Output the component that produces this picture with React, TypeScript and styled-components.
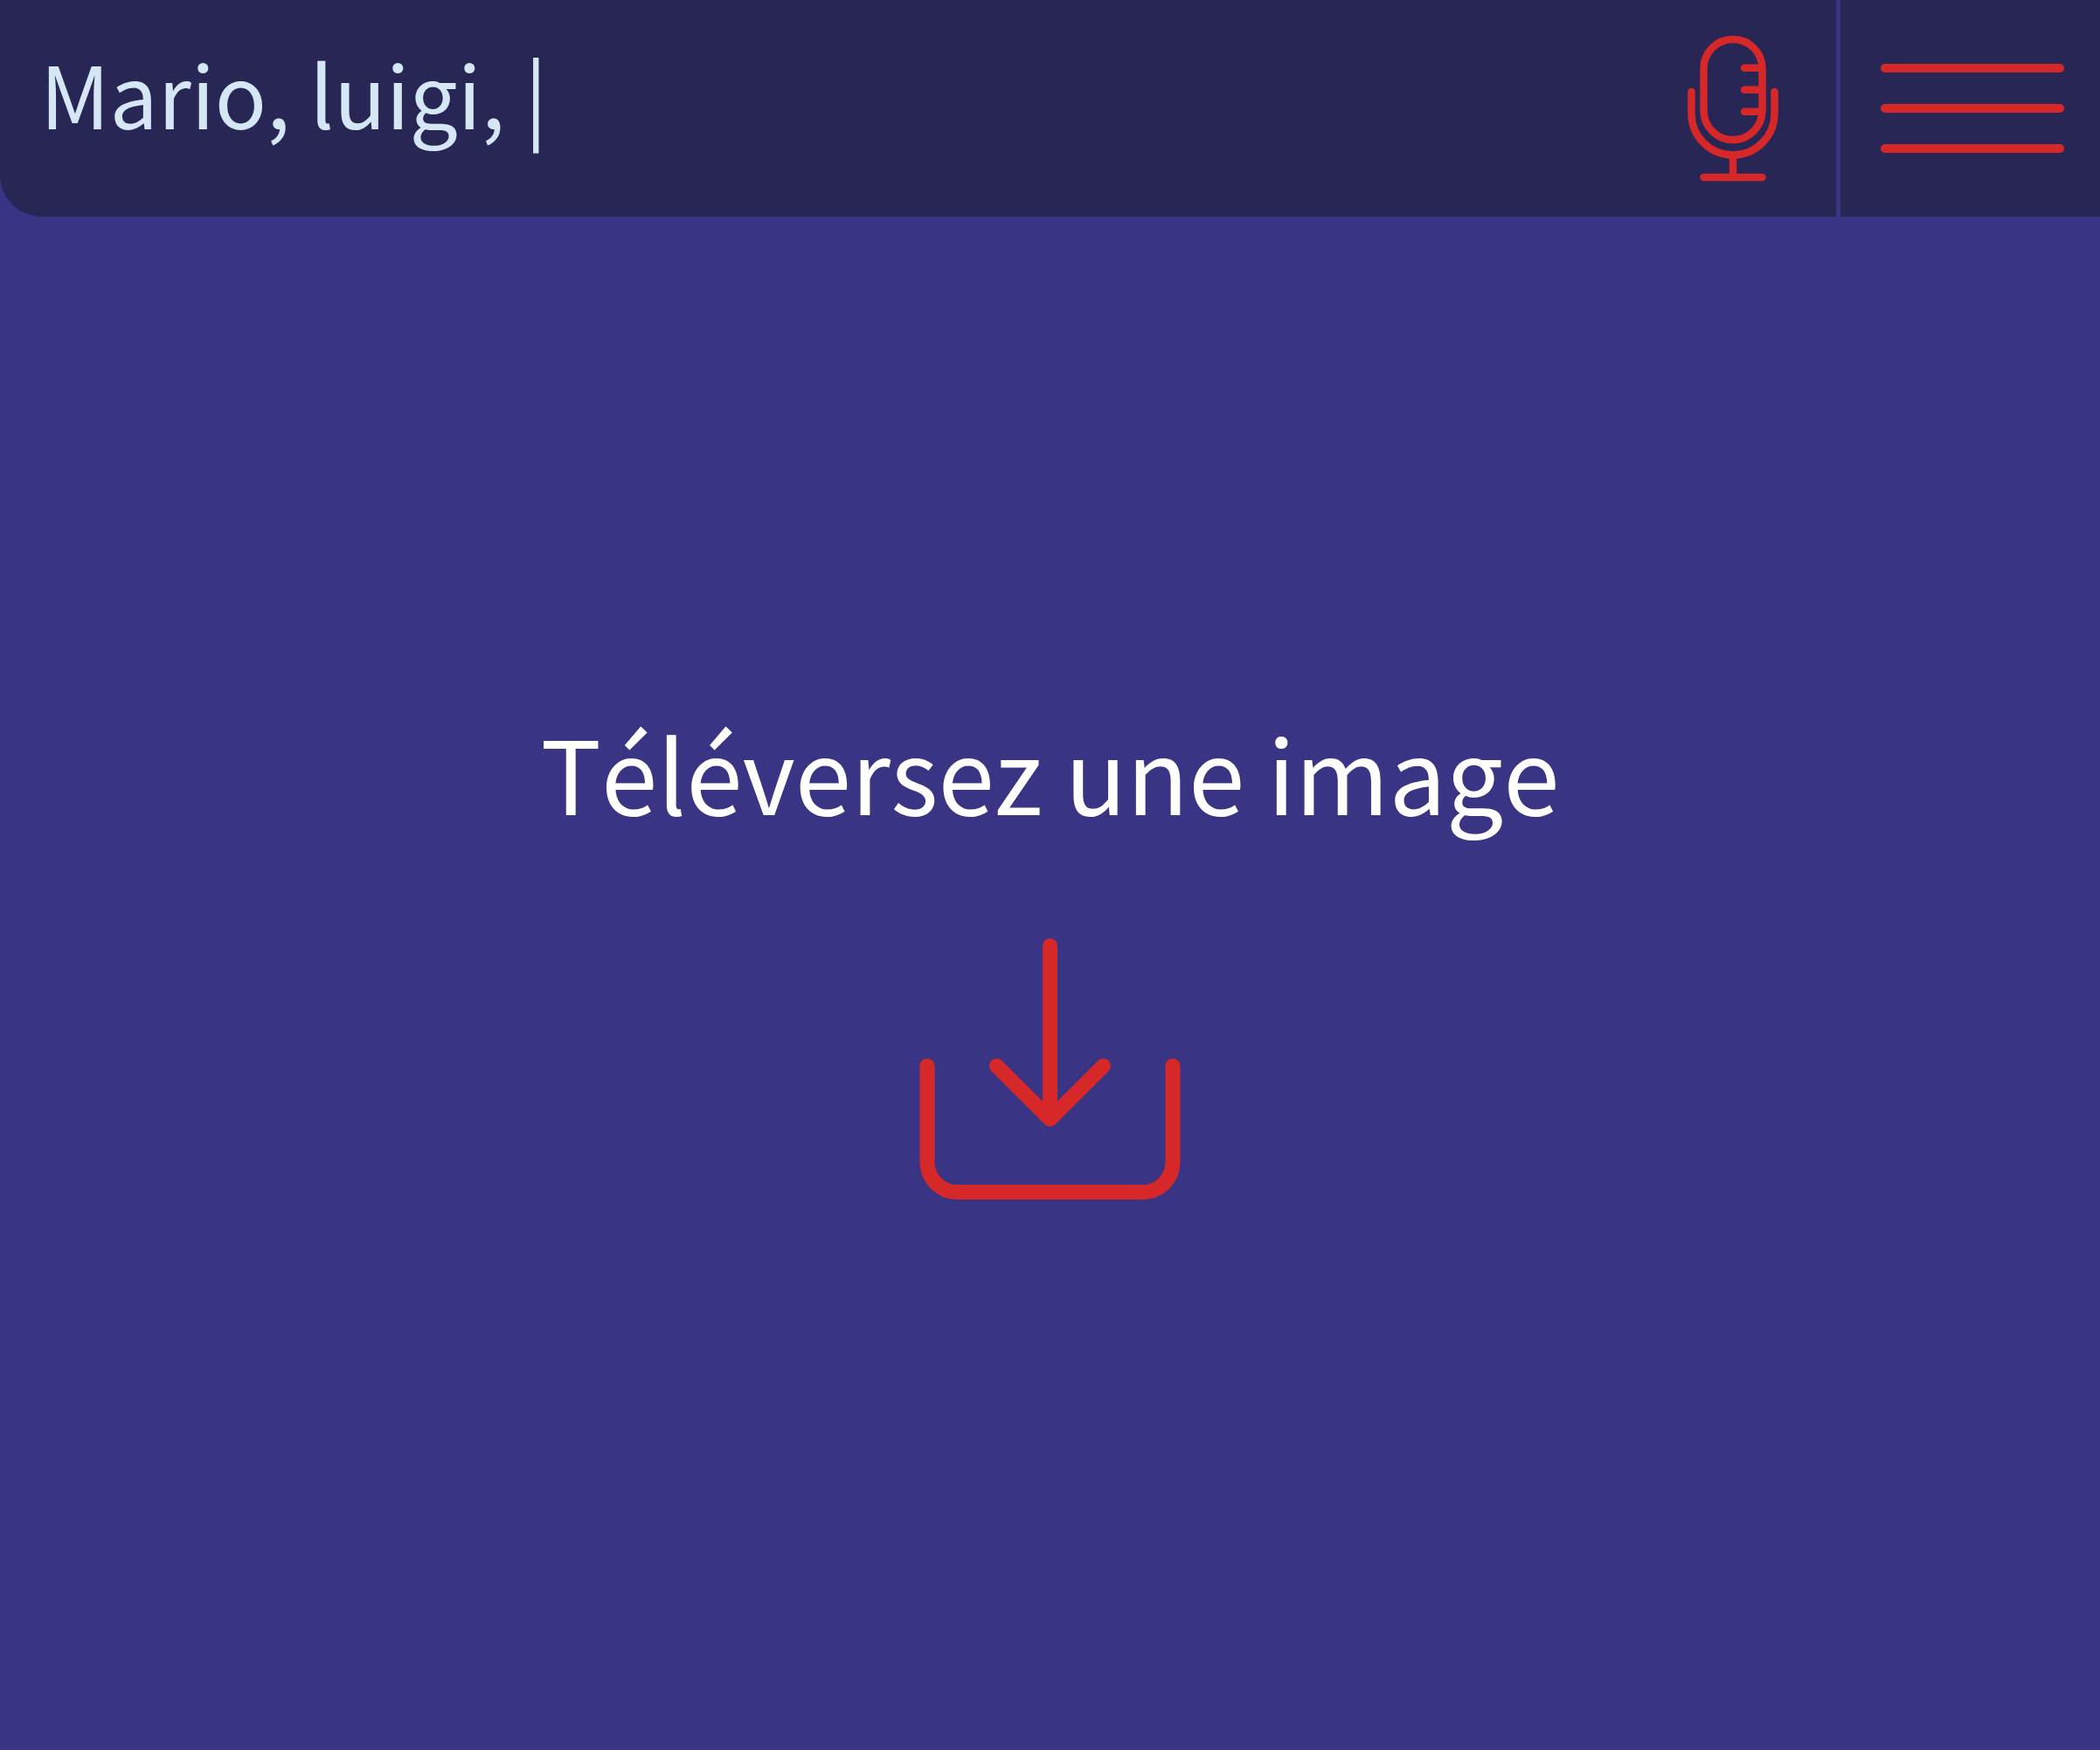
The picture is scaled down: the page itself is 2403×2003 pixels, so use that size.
import React, { useState } from "react";
import styled, { createGlobalStyle } from "styled-components";

const colors = {
  bar: "#282655",
  page: "#393484",
  accent: "#d62829",
  query: "#d5e6f5",
  title: "#ffffff",
};

const GlobalStyle = createGlobalStyle`
  *, *::before, *::after { box-sizing: border-box; }
  body {
    margin: 0;
    background: ${colors.page};
    font-family: "Noto Sans CJK SC", "Noto Sans", sans-serif;
  }
`;

const Page = styled.div`
  display: flex;
  flex-direction: column;
  min-height: 100vh;
`;

const TopBar = styled.header`
  display: flex;
  align-items: stretch;
  height: 248px;
  background: ${colors.bar};
  border-bottom-left-radius: 48px;
`;

const SearchForm = styled.form`
  display: flex;
  flex: 1;
  min-width: 0;
  padding: 0 66px 0 46px;
`;

const SearchInput = styled.input`
  flex: 1;
  min-width: 0;
  height: 210px;
  padding: 0;
  border: 0;
  outline: 0;
  background: transparent;
  color: ${colors.query};
  font: inherit;
  font-size: 98px;
  font-kerning: none;
`;

const IconButton = styled.button`
  display: flex;
  align-items: center;
  justify-content: center;
  padding: 0;
  border: 0;
  background: transparent;
  color: ${colors.accent};
  cursor: pointer;
`;

const MenuButton = styled(IconButton)`
  flex-direction: column;
  gap: 36px;
  width: 302px;
  padding-left: 5px;
  border-left: 5px solid ${colors.page};
`;

const MenuLine = styled.span`
  width: 210px;
  height: 10px;
  border-radius: 5px;
  background: currentColor;
`;

const Content = styled.main`
  display: flex;
  flex: 1;
  justify-content: center;
  align-items: center;
  padding-bottom: 84px;
`;

const DropZone = styled.button`
  display: flex;
  flex-direction: column;
  align-items: center;
  gap: 104px;
  padding: 0;
  border: 0;
  background: transparent;
  color: ${colors.title};
  font: inherit;
  font-size: 116px;
  font-kerning: none;
  line-height: 176px;
  cursor: pointer;
`;

const UploadIcon = styled.svg`
  display: block;
  width: 299px;
  height: 300px;
  color: ${colors.accent};
`;

const MicIcon = () => (
  <svg width="104" height="168" viewBox="0 0 104 168" fill="none" stroke="currentColor" strokeWidth="8.5" strokeLinecap="round" aria-hidden="true">
    <rect x="18.5" y="5" width="67" height="115" rx="33.5" />
    <path d="M65 37.700H84M65 62.700H84M65 87.700H84" />
    <path d="M4.500 65V90a47.500 47.500 0 0 0 95 0V65" />
    <path d="M52 138V163M18.500 163H85.500" />
  </svg>
);

export default function App() {
  const [query, setQuery] = useState("Mario, luigi, |");
  return (
    <Page>
      <GlobalStyle />
      <TopBar>
        <SearchForm role="search" onSubmit={(e) => e.preventDefault()}>
          <SearchInput
            type="text"
            aria-label="Recherche"
            value={query}
            onChange={(e) => setQuery(e.target.value)}
          />
          <IconButton type="button" aria-label="Recherche vocale">
            <MicIcon />
          </IconButton>
        </SearchForm>
        <MenuButton type="button" aria-label="Menu">
          <MenuLine />
          <MenuLine />
          <MenuLine />
        </MenuButton>
      </TopBar>
      <Content>
        <DropZone type="button">
          Téléversez une image
          <UploadIcon viewBox="0 0 299 300" fill="none" stroke="currentColor" strokeWidth="17" strokeLinecap="round" strokeLinejoin="round" aria-hidden="true">
            <path d="M149.500 8.500V206M88.500 146L149.500 207L210.500 146" />
            <path d="M9 146V256A34.500 34.500 0 0 0 43.500 290.500H255.500A34.500 34.500 0 0 0 290 256V146" />
          </UploadIcon>
        </DropZone>
      </Content>
    </Page>
  );
}
